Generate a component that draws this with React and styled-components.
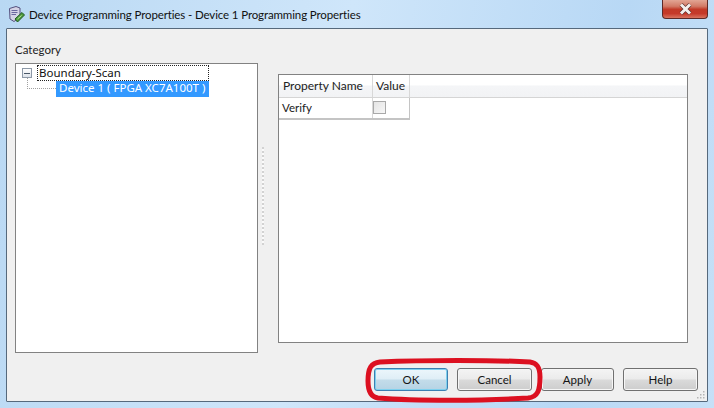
import React from "react";
import styled, { createGlobalStyle } from "styled-components";

const GlobalStyle = createGlobalStyle`
  html, body {
    margin: 0;
    padding: 0;
    background: #c3def6;
  }
`;

const Window = styled.div`
  position: relative;
  box-sizing: border-box;
  width: 714px;
  height: 408px;
  overflow: hidden;
  display: flex;
  flex-direction: column;
  padding: 0 6px 6px;
  background: linear-gradient(100deg, #b9d8f3 0%, #cfe6fa 45%, #b8d8f5 80%, #c6e0f7 100%);
  font-family: Lato, Roboto, sans-serif;
  font-size: 11.5px;
  color: #1a1a1a;
`;

const TitleBar = styled.div`
  height: 28px;
  flex: none;
  display: flex;
  align-items: flex-start;
  justify-content: space-between;
`;

const TitleLeft = styled.div`
  display: flex;
  align-items: center;
  gap: 4px;
  padding: 6px 0 0 2px;
`;

const TitleText = styled.span`
  font-size: 11.5px;
  letter-spacing: -0.12px;
  line-height: 17px;
  color: #111;
  white-space: nowrap;
`;

const CloseButton = styled.div`
  box-sizing: border-box;
  width: 46px;
  height: 19px;
  display: flex;
  align-items: center;
  justify-content: center;
  border: 1px solid #5d2a28;
  border-top: none;
  border-radius: 0 0 4px 4px;
  background: linear-gradient(#e2a594 0%, #d27a66 35%, #c23a28 52%, #c5392a 75%, #d9735f 100%);
`;

const Content = styled.div`
  flex: 1;
  min-height: 0;
  position: relative;
  display: flex;
  flex-direction: column;
  border: 1px solid #56697c;
  border-radius: 1px;
  background: #f0f0f0;
  padding: 0 9px 0 8px;
`;

const CategoryLabel = styled.div`
  height: 34px;
  flex: none;
  box-sizing: border-box;
  padding-top: 13px;
  line-height: 16px;
  color: #222;
`;

const Panes = styled.div`
  flex: none;
  height: 290px;
  display: flex;
`;

const TreePane = styled.div`
  box-sizing: border-box;
  width: 243px;
  flex: none;
  background: #fff;
  border: 1px solid #828282;
  padding: 1px 48px 0 6px;
  font-family: "Noto Sans", sans-serif;
  font-size: 11.5px;
`;

const TreeRoot = styled.div`
  display: flex;
  align-items: center;
  height: 16px;
`;

const Expander = styled.span`
  box-sizing: border-box;
  width: 10px;
  height: 10px;
  flex: none;
  margin-right: 5px;
  border: 1px solid #8d99a8;
  background: linear-gradient(#fff, #dde3ea);
  display: flex;
  align-items: center;
  justify-content: center;
  &::before {
    content: "";
    width: 6px;
    height: 1px;
    background: #4a5868;
  }
`;

const FocusLabel = styled.span`
  box-sizing: border-box;
  flex: 1;
  height: 16px;
  line-height: 13px;
  padding-left: 1px;
  border: 1px dotted #222;
  color: #111;
`;

const TreeChild = styled.div`
  display: flex;
  height: 16px;
  padding-left: 5px;
`;

const TreeElbow = styled.span`
  box-sizing: border-box;
  width: 29px;
  height: 11px;
  margin-top: -3px;
  flex: none;
  border-left: 1px dotted #a0a0a0;
  border-bottom: 1px dotted #a0a0a0;
`;

const SelectedLabel = styled.span`
  flex: 1;
  height: 16px;
  line-height: 14px;
  padding-left: 3px;
  background: #3399ff;
  color: #fff;
  white-space: nowrap;
`;

const Splitter = styled.div`
  width: 20px;
  flex: none;
  padding: 84px 0 0 4px;
  box-sizing: border-box;
`;

const SplitterGrip = styled.div`
  width: 2px;
  height: 98px;
  background: repeating-linear-gradient(#d2d2d2 0 2px, #fafafa 2px 4px);
`;

const PropertyPane = styled.div`
  box-sizing: border-box;
  width: 410px;
  flex: none;
  margin: 11px 0 10px;
  background: #fff;
  border: 1px solid #828282;
`;

const HeaderRow = styled.div`
  display: flex;
  height: 23px;
  background: linear-gradient(#fff 0%, #fff 45%, #f4f5f7 50%, #f2f3f5 100%);
  border-bottom: 1px solid #d5d5d5;
  box-sizing: border-box;
`;

const HeaderCell = styled.div`
  box-sizing: border-box;
  width: ${(p) => p.$w}px;
  flex: none;
  font-size: 12px;
  line-height: 22px;
  padding-left: ${(p) => p.$pad}px;
  border-right: 1px solid #d8d8d8;
  color: #222;
  white-space: nowrap;
`;

const DataRow = styled.div`
  display: flex;
  width: 131px;
  height: 22px;
  box-sizing: border-box;
  border-bottom: 2px solid #c4c4c4;
  border-right: 1px solid #c4c4c4;
`;

const DataCell = styled.div`
  box-sizing: border-box;
  width: ${(p) => p.$w}px;
  flex: none;
  display: flex;
  align-items: center;
  padding: 0 0 1px ${(p) => p.$pad}px;
  border-right: ${(p) => (p.$divider ? "1px solid #d8d8d8" : "none")};
  color: #222;
`;

const CheckBox = styled.span`
  box-sizing: border-box;
  width: 13px;
  height: 13px;
  border: 1px solid #a9a9a9;
  background: linear-gradient(135deg, #e4e4e4, #f7f7f7);
`;

const Footer = styled.div`
  flex: 1;
  display: flex;
  justify-content: flex-end;
  align-items: flex-start;
  gap: 9px;
  padding: 15px 0 0;
`;

const Button = styled.button`
  box-sizing: border-box;
  width: ${(p) => p.$w}px;
  height: 23px;
  margin: 0;
  padding: 0;
  border: 1px solid ${(p) => (p.$primary ? "#3c7fb1" : "#707070")};
  border-radius: 3px;
  background: ${(p) =>
    p.$primary
      ? "linear-gradient(#ecf6fb 0%, #dfeef6 48%, #c3dcea 52%, #b6d3e4 100%)"
      : "linear-gradient(#f4f4f4 0%, #ebebeb 48%, #dadada 52%, #cdcdcd 100%)"};
  box-shadow: ${(p) =>
    p.$primary ? "inset 0 0 0 1px #7ed0ee" : "inset 0 0 0 1px #f6f6f6"};
  font-family: inherit;
  font-size: 11.5px;
  color: #151515;
`;

const ResizeGrip = styled.svg`
  position: absolute;
  right: 1px;
  bottom: 1px;
`;

const Highlight = styled.svg`
  position: absolute;
  left: 364px;
  top: 357px;
  pointer-events: none;
`;

function AppIcon() {
  return (
    <svg width="17" height="17" viewBox="0 0 17 17">
      <path d="M1.5 2.5 L8 0.5 L12 2 L12 11 L6 15.5 L2 13 Z" fill="#d5d3e6" stroke="#54507e" strokeWidth="1" />
      <path d="M3.5 4.5 H9.5 M3.5 6.5 H9.5 M3.5 8.5 H8" stroke="#6b67a0" strokeWidth="1" />
      <path d="M7 13 L14 6.5 L16.5 9 L9.5 16 Z" fill="#4f9a3c" stroke="#1f5a22" strokeWidth="1" />
      <path d="M9.5 13 L13.5 9.5" stroke="#b8e4a0" strokeWidth="1" />
    </svg>
  );
}

function CloseIcon() {
  return (
    <svg width="15" height="12" viewBox="0 0 15 12">
      <path d="M3 1.5 L12 10.5 M12 1.5 L3 10.5" stroke="#5a2f2c" strokeWidth="4.2" />
      <path d="M3 1.5 L12 10.5 M12 1.5 L3 10.5" stroke="#f4f0ee" strokeWidth="3" />
    </svg>
  );
}

function Grip() {
  const dots = [[8, 2], [5, 5], [8, 5], [2, 8], [5, 8], [8, 8]];
  return (
    <ResizeGrip width="11" height="11" viewBox="0 0 11 11">
      {dots.map(([x, y]) => (
        <rect key={`${x}-${y}`} x={x} y={y} width="1.5" height="1.5" fill="#b5b5b5" />
      ))}
    </ResizeGrip>
  );
}

export default function App() {
  return (
    <>
      <GlobalStyle />
      <Window>
        <TitleBar>
          <TitleLeft>
            <AppIcon />
            <TitleText>Device Programming Properties - Device 1 Programming Properties</TitleText>
          </TitleLeft>
          <CloseButton>
            <CloseIcon />
          </CloseButton>
        </TitleBar>
        <Content>
          <CategoryLabel>Category</CategoryLabel>
          <Panes>
            <TreePane>
              <TreeRoot>
                <Expander />
                <FocusLabel>Boundary-Scan</FocusLabel>
              </TreeRoot>
              <TreeChild>
                <TreeElbow />
                <SelectedLabel>Device 1 ( FPGA XC7A100T )</SelectedLabel>
              </TreeChild>
            </TreePane>
            <Splitter>
              <SplitterGrip />
            </Splitter>
            <PropertyPane>
              <HeaderRow>
                <HeaderCell $w={94} $pad={4}>Property Name</HeaderCell>
                <HeaderCell $w={37} $pad={3}>Value</HeaderCell>
              </HeaderRow>
              <DataRow>
                <DataCell $w={94} $pad={3} $divider>Verify</DataCell>
                <DataCell $w={36} $pad={0}>
                  <CheckBox />
                </DataCell>
              </DataRow>
            </PropertyPane>
          </Panes>
          <Footer>
            <Button $w={74} $primary>OK</Button>
            <Button $w={75}>Cancel</Button>
            <Button $w={73}>Apply</Button>
            <Button $w={75}>Help</Button>
          </Footer>
          <Grip />
        </Content>
        <Highlight width="180" height="48" viewBox="0 0 180 48">
          <path
            d="M16 5 C60 3 130 3 166 5 C173 6 176 10 176 20 C176 33 174 40 164 41 C120 44 50 44 14 41 C7 40 4 34 4 24 C4 11 7 6 16 5 Z"
            fill="none"
            stroke="#dc1020"
            strokeWidth="5"
          />
        </Highlight>
      </Window>
    </>
  );
}
